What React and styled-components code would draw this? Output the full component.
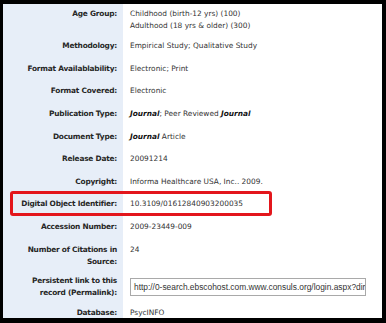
import React from "react";
import styled, { createGlobalStyle } from "styled-components";

const Global = createGlobalStyle`
  html, body { margin: 0; padding: 0; background: #000; }
  body { width: 386px; height: 323px; overflow: hidden; }
`;

const Frame = styled.div`
  box-sizing: border-box;
  width: 386px;
  height: 323px;
  background: #000;
  padding: 4px 4px 5px 3px;
`;

const Sheet = styled.div`
  height: 100%;
  overflow: hidden;
  background: #fff;
  display: flex;
  flex-direction: column;
  font-family: "DejaVu Sans", Verdana, sans-serif;
  font-size: 7.4px;
  line-height: 12px;
  color: #333;
`;

const Row = styled.div`
  position: relative;
  flex: 0 0 auto;
  box-sizing: border-box;
  display: grid;
  grid-template-columns: 120px 1fr;
  height: ${(p) => p.$h}px;
  ${(p) =>
    p.$marked &&
    `
    &::after {
      content: "";
      position: absolute;
      left: 7px;
      top: -2px;
      width: 262px;
      height: 25px;
      box-sizing: border-box;
      border: 3px solid #e3161c;
      border-radius: 3px;
      pointer-events: none;
    }
  `}
`;

const Label = styled.div`
  display: flex;
  justify-content: flex-end;
  align-items: ${(p) => (p.$top ? "flex-start" : "center")};
  padding: ${(p) => (p.$top ? `${p.$top}px` : "0")} 6px 0 4px;
  text-align: right;
  font-weight: bold;
  letter-spacing: -0.22px;
  color: #262626;
  background: #e7eef8;
`;

const Value = styled.div`
  display: flex;
  flex-direction: column;
  justify-content: ${(p) => (p.$top ? "flex-start" : "center")};
  padding: ${(p) => (p.$top ? `${p.$top}px` : "0")} 4px 0 7px;
  white-space: nowrap;
  overflow: hidden;
`;

const Em = styled.b`
  font-style: italic;
  color: #111;
`;

const LinkBox = styled.div`
  box-sizing: border-box;
  width: 236px;
  height: 18px;
  border: 1px solid #a9a9a9;
  padding: 0 3px;
  line-height: 16px;
  overflow: hidden;
  white-space: nowrap;
  color: #333;
  font-family: "Liberation Sans", Arial, sans-serif;
  font-size: 8.4px;
`;

const S = 22.6;

const rows = [
  { label: "Age Group:", value: ["Childhood (birth-12 yrs) (100)", "Adulthood (18 yrs & older) (300)"], h: 31, top: 3.5 },
  { label: "Methodology:", value: "Empirical Study; Qualitative Study" },
  { label: "Format Availablability:", value: "Electronic; Print" },
  { label: "Format Covered:", value: "Electronic" },
  { label: "Publication Type:", value: <><Em>Journal</Em>; Peer Reviewed <Em>Journal</Em></> },
  { label: "Document Type:", value: <><Em>Journal</Em> Article</> },
  { label: "Release Date:", value: "20091214" },
  { label: "Copyright:", value: "Informa Healthcare USA, Inc.. 2009." },
  { label: "Digital Object Identifier:", value: "10.3109/01612840903200035", marked: true },
  { label: "Accession Number:", value: "2009-23449-009" },
  { label: <>Number of Citations in<br />Source:</>, value: "24", h: 33, top: 5.5 },
  { label: <>Persistent link to this<br />record (Permalink):</>, link: "http://0-search.ebscohost.com.www.consuls.org/login.aspx?direct=true&db=psyh", h: 31.3 },
  { label: "Database:", value: "PsycINFO", h: 20 },
];

export default function App() {
  return (
    <>
      <Global />
      <Frame>
        <Sheet>
          {rows.map((r, i) => (
            <Row key={i} $h={r.h || S} $marked={r.marked}>
              <Label $top={r.top}>
                <span>{r.label}</span>
              </Label>
              <Value $top={r.top}>
                {r.link ? (
                  <LinkBox>{r.link}</LinkBox>
                ) : Array.isArray(r.value) ? (
                  r.value.map((v, j) => <div key={j}>{v}</div>)
                ) : (
                  <div>{r.value}</div>
                )}
              </Value>
            </Row>
          ))}
        </Sheet>
      </Frame>
    </>
  );
}
